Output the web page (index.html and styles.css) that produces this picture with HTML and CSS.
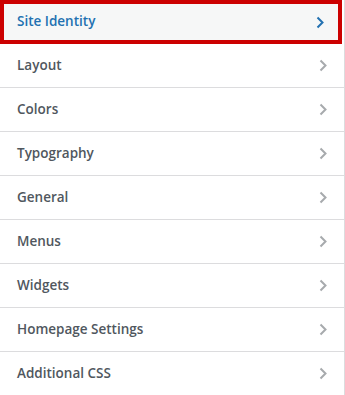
FILE: index.html
```html
<!DOCTYPE html>
<html>
<head>
<meta charset="utf-8">
<link rel="stylesheet" href="styles.css">
</head>
<body>
<ul class="sections">
  <li class="section active"><span class="title">Site Identity</span><svg class="chev" width="8" height="13" viewBox="0 0 8 13"><path d="M1.5 1.5 L6.5 6.5 L1.5 11.5" fill="none" stroke="currentColor" stroke-width="2"/></svg></li>
  <li class="section"><span class="title">Layout</span><svg class="chev" width="8" height="13" viewBox="0 0 8 13"><path d="M1.5 1.5 L6.5 6.5 L1.5 11.5" fill="none" stroke="currentColor" stroke-width="2"/></svg></li>
  <li class="section"><span class="title">Colors</span><svg class="chev" width="8" height="13" viewBox="0 0 8 13"><path d="M1.5 1.5 L6.5 6.5 L1.5 11.5" fill="none" stroke="currentColor" stroke-width="2"/></svg></li>
  <li class="section"><span class="title">Typography</span><svg class="chev" width="8" height="13" viewBox="0 0 8 13"><path d="M1.5 1.5 L6.5 6.5 L1.5 11.5" fill="none" stroke="currentColor" stroke-width="2"/></svg></li>
  <li class="section"><span class="title">General</span><svg class="chev" width="8" height="13" viewBox="0 0 8 13"><path d="M1.5 1.5 L6.5 6.5 L1.5 11.5" fill="none" stroke="currentColor" stroke-width="2"/></svg></li>
  <li class="section"><span class="title">Menus</span><svg class="chev" width="8" height="13" viewBox="0 0 8 13"><path d="M1.5 1.5 L6.5 6.5 L1.5 11.5" fill="none" stroke="currentColor" stroke-width="2"/></svg></li>
  <li class="section"><span class="title">Widgets</span><svg class="chev" width="8" height="13" viewBox="0 0 8 13"><path d="M1.5 1.5 L6.5 6.5 L1.5 11.5" fill="none" stroke="currentColor" stroke-width="2"/></svg></li>
  <li class="section"><span class="title">Homepage Settings</span><svg class="chev" width="8" height="13" viewBox="0 0 8 13"><path d="M1.5 1.5 L6.5 6.5 L1.5 11.5" fill="none" stroke="currentColor" stroke-width="2"/></svg></li>
  <li class="section"><span class="title">Additional CSS</span><svg class="chev" width="8" height="13" viewBox="0 0 8 13"><path d="M1.5 1.5 L6.5 6.5 L1.5 11.5" fill="none" stroke="currentColor" stroke-width="2"/></svg></li>
</ul>
</body>
</html>
```
FILE: styles.css
```css
* { box-sizing: border-box; }
html, body { margin: 0; padding: 0; background: #fff; }
body { width: 345px; height: 395px; overflow: hidden; font-family: "Open Sans", "Noto Sans", sans-serif; }
.sections {
  list-style: none;
  margin: 0;
  padding: 0;
  width: 345px;
  height: 395px;
  border-right: 1px solid #dcdcde;
}
.section {
  display: flex;
  align-items: center;
  justify-content: space-between;
  height: 44px;
  padding: 0 17px 2px 17px;
  border-bottom: 1px solid #dcdcde;
  color: #50575e;
  font-size: 13.5px;
  font-weight: 600;
}
.section .chev { color: #a7aaad; flex: none; margin-top: 2px; }
.section.active {
  height: 44px;
  width: 342px;
  border: 4px solid #cc0000;
  background: #f6f7f7;
  color: #2271b1;
  padding: 0 14px 2px 13px;
}
.section.active .chev { color: #2271b1; }
```
